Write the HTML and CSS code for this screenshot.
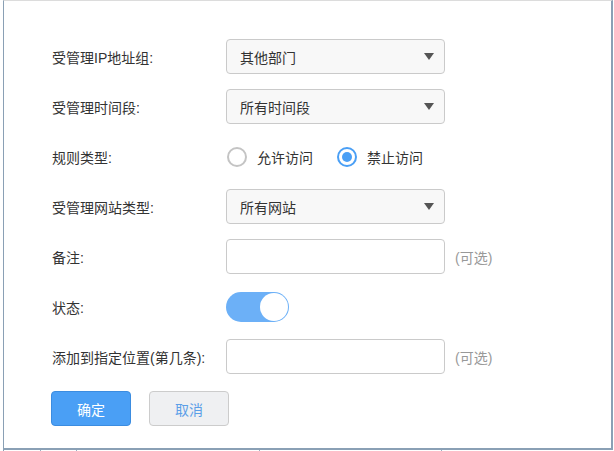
FILE: index.html
```html
<!DOCTYPE html>
<html lang="zh-CN">
<head>
<meta charset="utf-8">
<title>规则</title>
<link rel="stylesheet" href="styles.css">
</head>
<body>
<div class="panel">
  <div class="form">
    <div class="label">受管理IP地址组:</div>
    <div class="field"><div class="select"><span>其他部门</span><i class="caret"></i></div></div>

    <div class="label">受管理时间段:</div>
    <div class="field"><div class="select"><span>所有时间段</span><i class="caret"></i></div></div>

    <div class="label">规则类型:</div>
    <div class="field radios">
      <span class="radio"></span><span class="rtext">允许访问</span>
      <span class="radio on"></span><span class="rtext">禁止访问</span>
    </div>

    <div class="label">受管理网站类型:</div>
    <div class="field"><div class="select"><span>所有网站</span><i class="caret"></i></div></div>

    <div class="label">备注:</div>
    <div class="field"><div class="input"></div><span class="hint">(可选)</span></div>

    <div class="label">状态:</div>
    <div class="field"><div class="toggle"><span class="knob"></span></div></div>

    <div class="label">添加到指定位置(第几条):</div>
    <div class="field"><div class="input"></div><span class="hint">(可选)</span></div>
  </div>
  <div class="buttons">
    <button class="btn primary">确定</button>
    <button class="btn cancel">取消</button>
  </div>
</div>
<div class="table-head">
  <div class="cell c1"></div>
  <div class="cell c2"></div>
  <div class="cell c3"></div>
  <div class="cell c4"></div>
  <div class="cell c5"></div>
</div>
</body>
</html>
```

FILE: styles.css
```css
html, body {
  margin: 0;
  padding: 0;
  background: #fff;
}
body {
  font-family: "Liberation Sans", "Noto Sans CJK SC", sans-serif;
  font-size: 14px;
  color: #333;
  width: 614px;
  height: 451px;
  overflow: hidden;
}
.panel {
  margin-left: 3px;
  width: 610px;
  border-top: 1px solid #dcdcdc;
  border-left: 1px solid #8aa0b5;
  border-right: 2px solid #8aa0b5;
  border-bottom: 2px solid #8aa0b5;
  padding: 38px 0 22px 48px;
  box-sizing: border-box;
}
.form {
  display: grid;
  grid-template-columns: 174px auto;
  grid-auto-rows: 35px;
  row-gap: 15px;
  align-items: center;
}
.label {
  color: #333;
  white-space: nowrap;
}
.field {
  display: flex;
  align-items: center;
  height: 35px;
}
.select {
  width: 219px;
  height: 35px;
  box-sizing: border-box;
  border: 1px solid #cacaca;
  border-radius: 4px;
  background: #f8f8f8;
  display: flex;
  align-items: center;
  justify-content: space-between;
  padding: 0 10px 0 13px;
}
.caret {
  width: 0;
  height: 0;
  border-left: 5px solid transparent;
  border-right: 5px solid transparent;
  border-top: 7px solid #555;
}
.input {
  width: 219px;
  height: 35px;
  box-sizing: border-box;
  border: 1px solid #cacaca;
  border-radius: 4px;
  background: #fff;
}
.hint {
  margin-left: 10px;
  color: #999;
}
.radio {
  width: 20px;
  height: 20px;
  box-sizing: border-box;
  border: 2px solid #c4c4c4;
  border-radius: 50%;
  margin-left: 1px;
  position: relative;
}
.radio.on {
  border-color: #4a9ff5;
  margin-left: 24px;
}
.radio.on::after {
  content: "";
  position: absolute;
  left: 3px;
  top: 3px;
  width: 10px;
  height: 10px;
  border-radius: 50%;
  background: #4a9ff5;
}
.rtext {
  margin-left: 10px;
}
.toggle {
  width: 63px;
  height: 30px;
  border-radius: 15px;
  background: #6cb0f7;
  display: flex;
  align-items: center;
  justify-content: flex-end;
  padding-right: 1px;
  box-sizing: border-box;
}
.knob {
  width: 28px;
  height: 28px;
  border-radius: 50%;
  background: #fff;
}
.buttons {
  display: flex;
  gap: 18px;
  margin-top: 17px;
  margin-left: -1px;
}
.btn {
  width: 80px;
  height: 35px;
  border-radius: 4px;
  font-family: "Liberation Sans", "Noto Sans CJK SC", sans-serif;
  font-size: 14px;
  padding: 0;
}
.primary {
  background: #4a9ff5;
  border: 1px solid #3b8ce0;
  color: #fff;
}
.cancel {
  background: #eff0f2;
  border: 1px solid #cccccc;
  color: #5b9fe8;
}
.table-head {
  display: flex;
  margin-left: 3px;
  height: 3px;
  border-left: 1px solid #8aa0b5;
}
.cell {
  height: 3px;
  border-right: 1px solid #9aafc3;
}
.c1 { width: 36px; }
.c2 { width: 35px; }
.c3 { width: 182px; }
.c4 { width: 181px; }
.c5 { flex: 1; border-right: none; }
```
